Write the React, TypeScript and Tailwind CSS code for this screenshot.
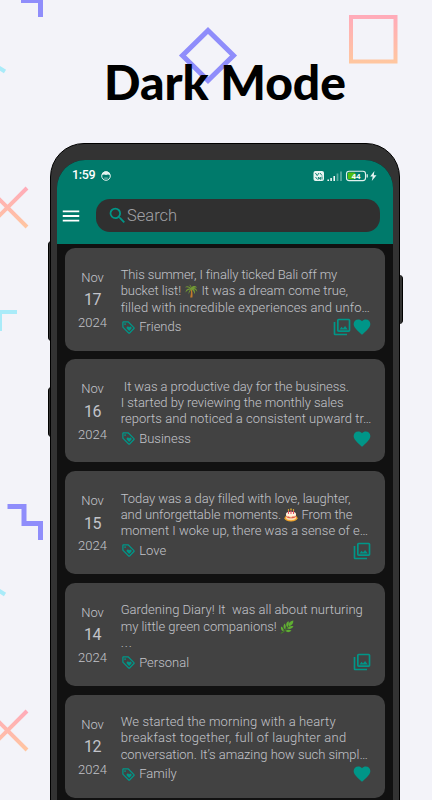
import React from 'react';
import { MdFavorite, MdMenu, MdOutlineLoyalty, MdOutlinePhotoLibrary, MdSearch } from 'react-icons/md';

interface DiaryEntry {
    month: string;
    day: string;
    year: string;
    tag: string;
    lines: { content: React.ReactNode; spacing: string }[];
    hasPhotos?: boolean;
    isFavorite?: boolean;
}

const PalmIcon = () => (
    <svg viewBox="0 0 14 14" className="inline-block w-[14px] h-[14px] align-[-3px]">
        <path d="M7.2 4.5C8.6 7 8.8 10 8.4 13.5H6.2C7 10 7.3 7.5 6.5 4.8Z" fill="#c27a2c" />
        <path d="M7 4.4C5 1.8 2.6 1.6.8 3.5c2-.5 3.8-.2 5.2 1C3 4.6 1.5 6 1.5 8.6 3 6.7 4.6 5.6 6.6 5.3 5 6.8 4.3 8.3 4.8 10.2 5.4 8.2 6.4 6.8 7.4 5.6c1.8 1.2 2.8 2.5 3.2 4.7.9-2 .5-3.7-1.1-5 1.8.2 2.7 1 3.7 2.6.2-2.4-1.1-3.8-3.5-4 1.2-.6 2.2-.7 3.5-.2C12 1.5 9 1.2 7.6 3.4 7.4 2 6.6 1 5 .7 6.2 1.8 6.8 3 7 4.4Z" fill="#729a34" />
    </svg>
);

const CakeIcon = () => (
    <svg viewBox="0 0 14 14" className="inline-block w-[14px] h-[14px] align-[-3px]">
        <ellipse cx="7" cy="10.2" rx="6.5" ry="3.4" fill="#f1a52b" />
        <path d="M2 6v4.2c1 2.6 9 2.6 10 0V6Z" fill="#f9dfb1" />
        <ellipse cx="7" cy="6" rx="5" ry="2.2" fill="#fff0dc" />
        <path d="M2 7.8c1.2 1.6 2 .4 3 1s2 1.2 3 .2 2.4.4 4-1.2v1c-2 2-8 2-10 0Z" fill="#e0584a" />
        <path d="M4.5 3v3M7 2.4V6M9.5 3v3" stroke="#e64e62" strokeWidth="1" />
        <path d="M4.5 1.3v1.5M7 .5v1.7M9.5 1.3v1.5" stroke="#ffc12e" strokeWidth="1.2" />
    </svg>
);

const HerbIcon = () => (
    <svg viewBox="0 0 14 14" className="inline-block w-[14px] h-[14px] align-[-3px]">
        <path d="M.8 13.4C4.8 11.5 8.2 8 11.5 2.5" stroke="#41891f" strokeWidth="1" fill="none" />
        <path d="M13.4.6C9.8 1.2 8.5 3 9 6.2 12 5.6 13.3 3.8 13.4.6ZM8.4 1C5.8 3 5.5 5.2 7.3 7.4 9 5 9.3 3.2 8.4 1ZM4.5 3.5C3 6 3.2 8 5.2 9.5 6.2 7 6 5.2 4.5 3.5ZM1 6.5c-.5 2.6.5 4.3 2.6 4.9C4 9 3.1 7.5 1 6.5ZM13.5 6.3c-3-.7-5 .2-6.1 2.3 2.5 1 4.5.3 6.1-2.3ZM11.5 10.4c-2.4-1.2-4.5-.9-6 .7 2 1.6 4 1.3 6-.7Z" fill="#5fae32" />
    </svg>
);

const entries: DiaryEntry[] = [
    {
        month: 'Nov', day: '17', year: '2024', tag: 'Friends', hasPhotos: true, isFavorite: true,
        lines: [
            { content: 'This summer, I finally ticked Bali off my', spacing: 'tracking-[-0.12px]' },
            { content: <>bucket list! <PalmIcon /> It was a dream come true,</>, spacing: 'tracking-[-0.04px]' },
            { content: 'filled with incredible experiences and unfo…', spacing: 'tracking-[0.09px]' },
        ],
    },
    {
        month: 'Nov', day: '16', year: '2024', tag: 'Business', isFavorite: true,
        lines: [
            { content: ' It was a productive day for the business.', spacing: 'tracking-[-0.08px]' },
            { content: 'I started by reviewing the monthly sales', spacing: 'tracking-[-0.04px]' },
            { content: 'reports and noticed a consistent upward tr…', spacing: 'tracking-[0.05px]' },
        ],
    },
    {
        month: 'Nov', day: '15', year: '2024', tag: 'Love', hasPhotos: true,
        lines: [
            { content: 'Today was a day filled with love, laughter,', spacing: 'tracking-[-0.06px]' },
            { content: <>and unforgettable moments. <CakeIcon /> From the</>, spacing: 'tracking-[-0.06px]' },
            { content: 'moment I woke up, there was a sense of e…', spacing: 'tracking-[0.01px]' },
        ],
    },
    {
        month: 'Nov', day: '14', year: '2024', tag: 'Personal', hasPhotos: true,
        lines: [
            { content: 'Gardening Diary! It  was all about nurturing', spacing: 'tracking-[0.02px]' },
            { content: <>my little green companions! <HerbIcon /></>, spacing: 'tracking-[-0.03px]' },
            { content: '...', spacing: 'tracking-[0.9px]' },
        ],
    },
    {
        month: 'Nov', day: '12', year: '2024', tag: 'Family', isFavorite: true,
        lines: [
            { content: 'We started the morning with a hearty', spacing: 'tracking-[0.13px]' },
            { content: 'breakfast together, full of laughter and', spacing: 'tracking-[0.25px]' },
            { content: 'conversation. It’s amazing how such simpl…', spacing: 'tracking-[-0.04px]' },
        ],
    },
];

const EntryCard: React.FC<{ entry: DiaryEntry }> = ({ entry }) => (
    <div className="flex h-[103px] shrink-0 rounded-[10px] bg-[#424242] text-[#c3c4ca] font-light">
        <div className="w-[55px] shrink-0 pt-[18.9px] flex flex-col items-center leading-[22.6px] text-[13px]">
            <span>{entry.month}</span>
            <span className="text-[16px] tracking-[-0.6px] font-normal">{entry.day}</span>
            <span>{entry.year}</span>
        </div>
        <div className="flex-1 min-w-0 pt-[19.4px] pl-[0.7px] pr-[13px]">
            {entry.lines.map((line, index) => (
                <p key={index} className={`h-[16.3px] leading-[16.3px] text-[13px] whitespace-pre ${line.spacing}`}>{line.content}</p>
            ))}
            <div className="flex items-center h-[20px] mt-[1.2px]">
                <MdOutlineLoyalty className="w-[15px] h-[15px] text-[#009688]" />
                <span className="ml-[3.5px] text-[13px]">{entry.tag}</span>
                <div className="ml-auto flex text-[#009688]">
                    {entry.hasPhotos && <MdOutlinePhotoLibrary className="w-5 h-5" />}
                    {entry.isFavorite && <MdFavorite className="w-5 h-5" />}
                </div>
            </div>
        </div>
    </div>
);

const StatusBar = () => (
    <div className="flex items-center h-[32px] pl-[15px] pr-[16px] text-white">
        <span className="w-[24px] text-[12.5px] tracking-[-0.3px] font-medium whitespace-nowrap">1:59</span>
        <svg viewBox="0 0 10 10" className="ml-[5px] w-[10px] h-[10px]" fill="none">
            <circle cx="5" cy="5" r="4.3" stroke="#e4f3f0" strokeWidth="1" />
            <path d="M1 4V2.2C3 0 7 0 9 2.2V4L7 3.4 5 4 3 3.4Z" fill="#e4f3f0" />
            <path d="M3.2 7.1h3.6" stroke="#b3d7d1" strokeWidth=".8" />
        </svg>
        <svg viewBox="0 0 64 12" className="ml-auto w-[64px] h-[12px]">
            <rect x=".5" y="1" width="10.5" height="10" rx="2" fill="#e8f4f2" />
            <path d="M2.4 3l1.8 2.6L6 3M7 3l2 2.5M2.5 7l2 2.5M5.4 9.5V7l2 2.5V7M9 6.5v3" stroke="#007a6b" strokeWidth=".9" fill="none" />
            <path d="M15.2 9.4v1.6M18.1 8v3M21.2 6v5" stroke="#fff" strokeWidth="1.5" />
            <path d="M24.5 3.5V11M28 1.5V11" stroke="#58a99e" strokeWidth="1.8" />
            <rect x="33.5" y="1.2" width="19" height="9.4" rx="2.6" fill="none" stroke="#e1f1ee" strokeWidth="1.1" />
            <rect x="34.8" y="2.5" width="7.5" height="6.8" rx="1" fill="#50be0f" />
            <path d="M54.2 4.3v3.2" stroke="#d0e8e4" strokeWidth="1.4" />
            <text x="43" y="8.8" textAnchor="middle" fontSize="8" fontWeight="600" fill="#fff">44</text>
            <path d="M61.4 1L57.2 6.5h2.5L58.8 11 63.5 5.2h-2.7Z" fill="#e8f4f2" />
        </svg>
    </div>
);

const Backdrop = () => (
    <svg viewBox="0 0 432 800" className="absolute left-0 top-0 w-[432px] h-[800px]" fill="none">
        <defs>
            <linearGradient id="blush" x1="0" y1="0" x2="0" y2="1">
                <stop offset="0" stopColor="#ffabb9" />
                <stop offset="1" stopColor="#ffc6a0" />
            </linearGradient>
            <linearGradient id="crossTop" gradientUnits="userSpaceOnUse" x1="0" y1="188" x2="0" y2="228">
                <stop offset="0" stopColor="#ffabb9" />
                <stop offset="1" stopColor="#ffc6a0" />
            </linearGradient>
            <linearGradient id="crossBottom" gradientUnits="userSpaceOnUse" x1="0" y1="711" x2="0" y2="751">
                <stop offset="0" stopColor="#ffabb9" />
                <stop offset="1" stopColor="#ffc6a0" />
            </linearGradient>
        </defs>
        <path d="M21 .5H40.5V17" stroke="#8f8dfb" strokeWidth="5" />
        <path d="M208 30.5L233.5 55.5 208 80.5 182.5 55.5Z" stroke="#8f8dfb" strokeWidth="5" />
        <rect x="351" y="17" width="44.5" height="44.5" stroke="url(#blush)" strokeWidth="4" />
        <path d="M-2 67L5 71.5M-2 590L5 594.5" stroke="#a9ebf9" strokeWidth="4" />
        <path d="M-12 188L27 227M-12 227L27 188" stroke="url(#crossTop)" strokeWidth="4" />
        <path d="M-12 711L27 750M-12 750L27 711" stroke="url(#crossBottom)" strokeWidth="4" />
        <path d="M-2 312H17M0 312V331" stroke="#a9ebf9" strokeWidth="4" />
        <path d="M7.5 506.5H24V523.5H40.5V540" stroke="#8f8dfb" strokeWidth="5" />
    </svg>
);

export default function App() {
    return (
        <div className="relative w-[432px] h-[800px] overflow-hidden bg-[#f3f3f9] font-[Roboto,sans-serif]">
            <Backdrop />
            <div className="relative flex flex-col items-center">
                <h1 className="h-[143px] pt-[52px] pl-[18px] text-[48px] leading-[60px] font-black text-black whitespace-nowrap font-[Lato,sans-serif]">Dark Mode</h1>
                <div className="relative ml-[18px] w-[350px] h-[700px]">
                    {/* side keys of the handset */}
                    <div className="absolute left-[-2px] top-[98px] w-[4px] h-[100px] rounded-l-sm border-l border-black bg-[#333333]" />
                    <div className="absolute left-[-2px] top-[244px] w-[4px] h-[50px] rounded-l-sm border-l border-black bg-[#333333]" />
                    <div className="absolute right-[-3px] top-[132px] w-[5px] h-[49px] rounded-r-sm border-r border-black bg-[#333333]" />
                    <div className="relative h-full rounded-t-[34px] border border-black bg-[#333333] px-[6px] pt-[15.5px]">
                        <div className="h-full rounded-t-[28px] overflow-hidden bg-[#111111]">
                            <header className="h-[84px] bg-[#007a6b]">
                                <StatusBar />
                                <div className="flex items-center h-[48px] pl-[3px] pr-[13px]">
                                    <MdMenu className="w-[22px] h-[22px] text-white" />
                                    <div className="flex items-center ml-[14px] flex-1 h-[33px] rounded-[14px] bg-[#303030] pl-[11px]">
                                        <MdSearch className="w-[21px] h-[21px] text-[#009688]" />
                                        <span className="-ml-px pt-[2px] text-[16.5px] font-light text-[#a2a2a6]">Search</span>
                                    </div>
                                </div>
                            </header>
                            <main className="flex flex-col gap-[8.75px] px-2 pt-[4.2px]">
                                {entries.map((entry) => (
                                    <EntryCard key={entry.day} entry={entry} />
                                ))}
                            </main>
                        </div>
                    </div>
                </div>
            </div>
        </div>
    );
}
